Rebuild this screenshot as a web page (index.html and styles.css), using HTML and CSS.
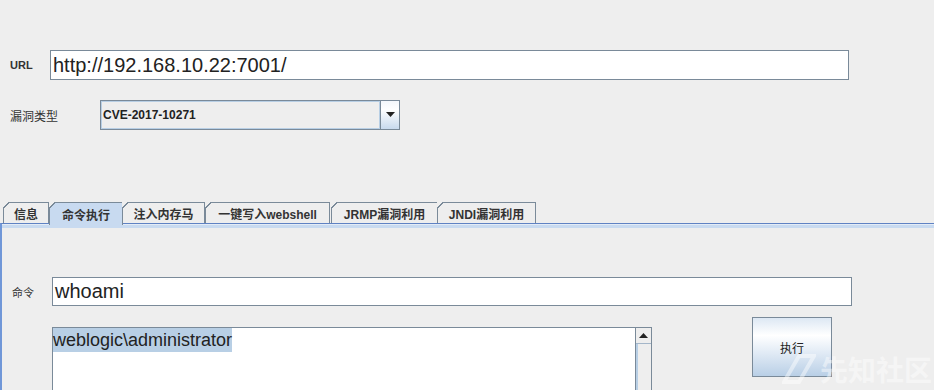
FILE: index.html
```html
<!DOCTYPE html>
<html>
<head>
<meta charset="utf-8">
<link rel="stylesheet" href="styles.css">
</head>
<body>
<div class="app">
  <div class="top">
    <div class="row url-row">
      <span class="lbl lbl-url">URL</span>
      <div class="field url-field">http://192.168.10.22:7001/</div>
    </div>
    <div class="row type-row">
      <span class="lbl lbl-type">漏洞类型</span>
      <div class="combo">
        <div class="combo-text">CVE-2017-10271</div>
        <div class="combo-btn">
          <svg width="9" height="6" viewBox="0 0 9 6"><path d="M0 0H9L4.5 5Z" fill="#222"/></svg>
        </div>
      </div>
    </div>
  </div>

  <div class="tabs">
    <div class="tab t1">信息</div>
    <div class="tab t2 sel">命令执行</div>
    <div class="tab t3">注入内存马</div>
    <div class="tab t4">一键写入webshell</div>
    <div class="tab t5">JRMP漏洞利用</div>
    <div class="tab t6">JNDI漏洞利用</div>
  </div>

  <div class="panel">
    <div class="band"></div>
    <div class="panel-body">
      <div class="cmd-row">
        <span class="lbl lbl-cmd">命令</span>
        <div class="field cmd-field">whoami</div>
      </div>
      <div class="out-row">
        <div class="textarea">
          <div class="ta-content"><span class="selected">weblogic\administrator</span></div>
          <div class="scrollbar">
            <div class="sb-up">
              <svg width="9" height="6" viewBox="0 0 9 6"><path d="M0 5H9L4.5 0Z" fill="#222"/></svg>
            </div>
            <div class="sb-track"></div>
          </div>
        </div>
        <button class="exec">执行</button>
      </div>
    </div>
  </div>

  <div class="watermark">
    <svg width="34" height="30" viewBox="0 0 34 30"><path d="M2 28L17 2H32L17 28Z" fill="none" stroke="rgba(255,255,255,0.45)" stroke-width="4"/></svg>
    <span>先知社区</span>
  </div>
</div>
</body>
</html>
```

FILE: styles.css
```css
* { box-sizing: border-box; }
html, body {
  margin: 0;
  padding: 0;
  background: #eeeeee;
  overflow: hidden;
}
body {
  font-family: "Liberation Sans", "Noto Sans CJK SC", sans-serif;
  color: #333;
  width: 934px;
  height: 390px;
}
.app {
  position: relative;
  width: 934px;
  height: 390px;
  overflow: hidden;
}
.top {
  padding-top: 50px;
  height: 202px;
}
.row {
  display: flex;
  align-items: center;
  padding-left: 10px;
}
.type-row { margin-top: 20px; }
.lbl {
  font-size: 11px;
  color: #333;
}
.lbl-url {
  width: 40px;
  font-weight: bold;
}
.lbl-type {
  width: 90px;
  font-size: 12px;
  font-family: "Noto Sans CJK SC", sans-serif;
}
.field {
  background: #fff;
  border: 1px solid #7a8a99;
  font-size: 20px;
  color: #222;
  padding-left: 2px;
  display: flex;
  align-items: center;
}
.url-field {
  width: 799px;
  height: 30px;
}
.combo {
  display: flex;
  width: 300px;
  height: 30px;
}
.combo-text {
  flex: 1;
  border: 1px solid #7a8a99;
  border-right: none;
  box-shadow: inset 1px 1px 0 #b8cfe5, inset -1px -1px 0 #b8cfe5;
  background: #eeeeee;
  font-size: 12px;
  font-weight: bold;
  color: #222;
  display: flex;
  align-items: center;
  padding-left: 2px;
}
.combo-btn {
  width: 20px;
  border: 1px solid #7a8a99;
  background: linear-gradient(#f4f7fb, #ffffff 30%, #c8daee);
  display: flex;
  align-items: center;
  justify-content: center;
}

.tabs {
  display: flex;
  height: 21px;
  padding-left: 3px;
  align-items: stretch;
  position: relative;
  z-index: 2;
}
.tab {
  position: relative;
  border: 1px solid #7a8a99;
  border-bottom: none;
  font-size: 12px;
  font-weight: bold;
  color: #333;
  display: flex;
  align-items: center;
  justify-content: center;
  background: #eeeeee;
  padding-top: 1px;
  white-space: nowrap;
}
.tab::before {
  content: "";
  position: absolute;
  left: -1px;
  top: -1px;
  width: 6px;
  height: 6px;
  background: linear-gradient(135deg, #eeeeee 45%, #7a8a99 45%, #7a8a99 60%, transparent 60%);
}
.t1 { width: 46px; }
.t2 { width: 74px; }
.t3 { width: 83px; margin-left: -1px; }
.t4 { width: 125px; }
.t5 { width: 107px; margin-left: 1px; }
.t6 { width: 99px; margin-left: -1px; }
.tab.sel {
  background: #c8daf0;
  height: 23px;
  margin-bottom: -2px;
}

.panel {
  border-top: 1px solid #5f82c3;
  border-left: 2px solid #7097d8;
  height: 167px;
}
.band {
  height: 4px;
  background: linear-gradient(#e4ecf6 0, #e4ecf6 1px, #c8daf0 1px);
}
.panel-body {
  padding-top: 49px;
  padding-left: 10px;
}
.cmd-row {
  display: flex;
  align-items: center;
}
.lbl-cmd {
  width: 40px;
  font-family: "Noto Sans CJK SC", sans-serif;
  font-size: 11px;
}
.cmd-field {
  width: 800px;
  height: 29px;
}
.out-row {
  display: flex;
  align-items: flex-start;
  margin-top: 11px;
  padding-left: 40px;
}
.textarea {
  margin-top: 10px;
  width: 600px;
  height: 90px;
  border: 1px solid #7a8a99;
  background: #fff;
  display: flex;
}
.ta-content {
  flex: 1;
  font-size: 18px;
  color: #222;
  line-height: 24px;
}
.selected {
  background: #b8cfe5;
  display: inline-block;
}
.scrollbar {
  width: 16px;
  border-left: 1px solid #7a8a99;
  display: flex;
  flex-direction: column;
}
.sb-up {
  height: 16px;
  background: #eeeeee;
  border-bottom: 1px solid #a4b6c9;
  display: flex;
  align-items: center;
  justify-content: center;
}
.sb-track {
  flex: 1;
  background: #eeeeee;
  border-left: 2px solid #b8cfe5;
}
.exec {
  margin-left: 100px;
  width: 80px;
  height: 60px;
  border: 1px solid #7a8a99;
  background: linear-gradient(#dde8f4 0%, #ffffff 30%, #e6eef7 55%, #b9cfe6 100%);
  font-family: "Noto Sans CJK SC", sans-serif;
  font-size: 12px;
  color: #222;
  padding: 0;
}

.watermark {
  position: absolute;
  left: 782px;
  top: 352px;
  display: flex;
  align-items: center;
  gap: 4px;
  color: rgba(255, 255, 255, 0.45);
  font-family: "Noto Sans CJK SC", sans-serif;
  font-size: 28px;
  font-weight: bold;
  line-height: 34px;
  pointer-events: none;
}
```
